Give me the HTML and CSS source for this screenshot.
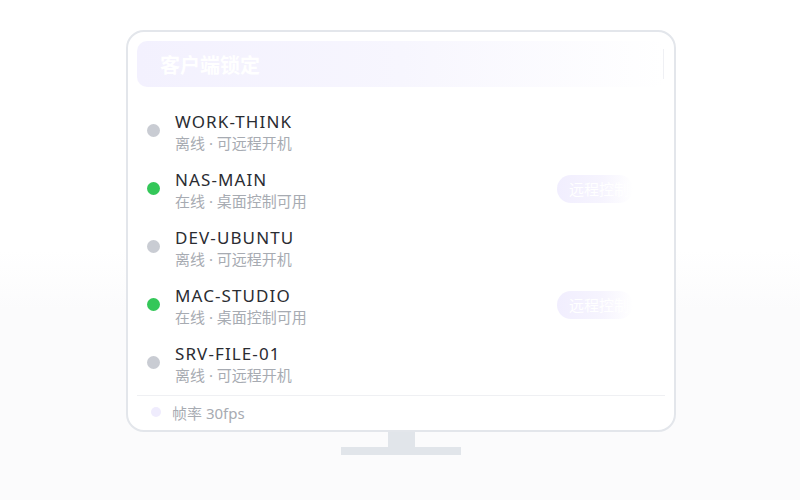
FILE: index.html
```html
<!DOCTYPE html>
<html lang="zh">
<head>
<meta charset="utf-8">
<link rel="stylesheet" href="styles.css">
</head>
<body>
<div class="stage">
  <div class="screen">
    <div class="header">
      <span class="title">客户端锁定</span>
      <span class="edge"></span>
    </div>
    <div class="list">
      <div class="row">
        <span class="dot off"></span>
        <div class="info"><div class="name">WORK-THINK</div><div class="sub">离线 · 可远程开机</div></div>
      </div>
      <div class="row">
        <span class="dot on"></span>
        <div class="info"><div class="name">NAS-MAIN</div><div class="sub">在线 · 桌面控制可用</div></div>
        <span class="btn">远程控制</span>
      </div>
      <div class="row">
        <span class="dot off"></span>
        <div class="info"><div class="name">DEV-UBUNTU</div><div class="sub">离线 · 可远程开机</div></div>
      </div>
      <div class="row">
        <span class="dot on"></span>
        <div class="info"><div class="name">MAC-STUDIO</div><div class="sub">在线 · 桌面控制可用</div></div>
        <span class="btn">远程控制</span>
      </div>
      <div class="row">
        <span class="dot off"></span>
        <div class="info"><div class="name">SRV-FILE-01</div><div class="sub">离线 · 可远程开机</div></div>
      </div>
    </div>
    <div class="footer">
      <span class="fdot"></span>
      <span class="ftext">帧率 30fps</span>
    </div>
  </div>
  <div class="neck"></div>
  <div class="base"></div>
</div>
</body>
</html>
```

FILE: styles.css
```css
html, body {
  margin: 0;
  padding: 0;
}
body {
  width: 800px;
  height: 500px;
  overflow: hidden;
  background: linear-gradient(to bottom, #ffffff 0%, #ffffff 50%, #fbfbfc 62%, #fbfbfc 100%);
  font-family: "Noto Sans", "Noto Sans CJK SC", sans-serif;
}
.stage {
  padding-top: 30px;
  margin-left: 126px;
  width: 550px;
  display: flex;
  flex-direction: column;
  align-items: center;
}
.screen {
  width: 550px;
  height: 402px;
  box-sizing: border-box;
  border: 2px solid #e3e6eb;
  border-radius: 18px;
  background: #ffffff;
  padding: 9px 9px 0 9px;
  display: flex;
  flex-direction: column;
}
.header {
  height: 46px;
  border-radius: 10px;
  background: linear-gradient(to right, #f3f1fe 0%, #f7f6fe 50%, #ffffff 100%);
  display: flex;
  align-items: center;
  padding-left: 23px;
}
.title {
  color: #ffffff;
  font-size: 20px;
  font-weight: 700;
}
.edge {
  margin-left: auto;
  width: 1px;
  height: 30px;
  margin-right: 1px;
  background: #eff0f4;
}
.list {
  margin-top: 16px;
  display: flex;
  flex-direction: column;
}
.row {
  height: 58px;
  box-sizing: border-box;
  padding: 8px 0 0 10px;
  display: flex;
  align-items: flex-start;
}
.dot {
  width: 13px;
  height: 13px;
  border-radius: 50%;
  margin-top: 13px;
  margin-right: 15px;
  flex: none;
}
.dot.off { background: #c9ccd3; }
.dot.on { background: #34c759; }
.info {
  display: flex;
  flex-direction: column;
}
.name {
  font-size: 17px;
  line-height: 22px;
  color: #2a2c32;
  font-weight: 400;
  letter-spacing: 1.1px;
}
.sub {
  font-size: 15px;
  line-height: 21px;
  color: #a7abb2;
}
.btn {
  margin-left: auto;
  margin-right: 32px;
  margin-top: 6px;
  width: 76px;
  height: 28px;
  border-radius: 14px;
  box-sizing: border-box;
  padding-left: 12px;
  background: linear-gradient(to right, #f1eefe 0%, #f6f4fe 60%, #ffffff 100%);
  color: #ffffff;
  font-size: 15px;
  line-height: 28px;
  white-space: nowrap;
  overflow: hidden;
}
.footer {
  margin-top: 2px;
  border-top: 1px solid #eff0f3;
  height: 32px;
  display: flex;
  align-items: center;
  padding-left: 14px;
}
.fdot {
  width: 10px;
  height: 10px;
  border-radius: 50%;
  background: #efecfd;
  margin-right: 11px;
}
.ftext {
  font-size: 15px;
  color: #a7abb2;
}
.neck {
  width: 27px;
  height: 15px;
  background: #e1e5ea;
  margin-top: 0;
}
.base {
  width: 120px;
  height: 8px;
  background: #e1e5ea;
}
```
